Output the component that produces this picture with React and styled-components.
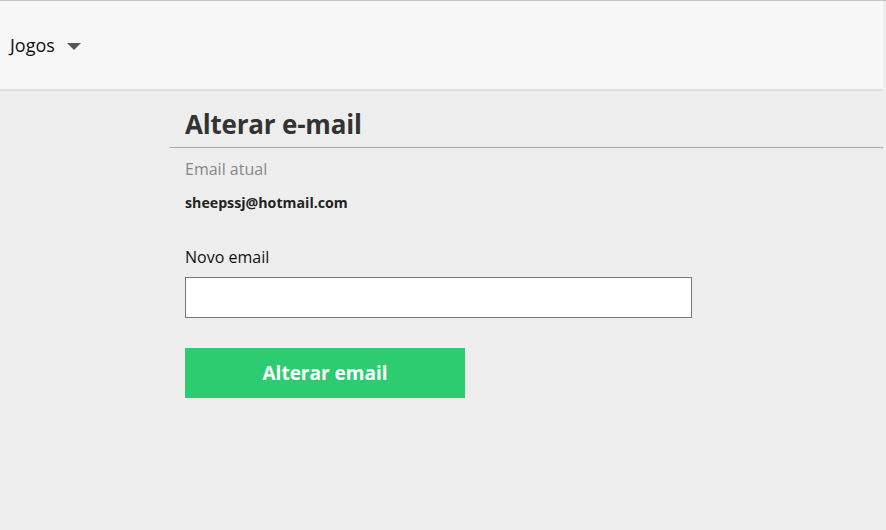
import styled, { createGlobalStyle } from 'styled-components'

const GlobalStyle = createGlobalStyle`
  html, body {
    margin: 0;
    padding: 0;
    background: #eeeeee;
    font-family: 'Open Sans', 'Noto Sans', sans-serif;
  }
`

export default function App () {
  return (
    <>
      <GlobalStyle />
      <Page>
        <TopBar>
          <MenuItem>
            Jogos
            <Caret />
          </MenuItem>
        </TopBar>
        <Main>
          <Title>Alterar e-mail</Title>
          <Section>
            <Muted>Email atual</Muted>
            <CurrentEmail>sheepssj@hotmail.com</CurrentEmail>
            <Label htmlFor='novo'>Novo email</Label>
            <Input id='novo' type='email' />
            <Button type='button'>Alterar email</Button>
          </Section>
        </Main>
      </Page>
    </>
  )
}

const Page = styled.div`
  min-height: 530px;
  border-top: 1px solid #c4c4c4;
`

const TopBar = styled.header`
  height: 90px;
  width: 883px;
  background: #f7f7f7;
  border-bottom: 2px solid #dedede;
  display: flex;
  align-items: center;
  padding-left: 10px;
  box-sizing: border-box;
`

const MenuItem = styled.div`
  display: flex;
  align-items: center;
  gap: 12px;
  font-size: 18px;
  color: #111;
`

const Caret = styled.span`
  width: 0;
  height: 0;
  border-left: 7px solid transparent;
  border-right: 7px solid transparent;
  border-top: 7px solid #555;
  margin-top: 2px;
`

const Main = styled.main`
  padding-left: 170px;
  width: 883px;
  box-sizing: border-box;
`

const Title = styled.h1`
  margin: 0;
  padding: 15px 0 5px 15px;
  font-size: 26px;
  font-weight: 700;
  color: #333;
  border-bottom: 1px solid #aaaaaa;
  letter-spacing: -0.2px;
`

const Section = styled.section`
  padding: 10px 15px;
  display: flex;
  flex-direction: column;
  align-items: flex-start;
`

const Muted = styled.div`
  font-size: 16px;
  color: #888;
`

const CurrentEmail = styled.div`
  margin-top: 13px;
  font-size: 14.2px;
  font-weight: 700;
  color: #222;
`

const Label = styled.label`
  margin-top: 34px;
  font-size: 16px;
  color: #111;
`

const Input = styled.input`
  margin-top: 9px;
  width: 507px;
  height: 41px;
  box-sizing: border-box;
  border: 1px solid #777;
  background: #fff;
  outline: none;
`

const Button = styled.button`
  margin-top: 30px;
  width: 280px;
  height: 50px;
  border: none;
  background: #2ecc71;
  color: #fff;
  font-family: inherit;
  font-size: 19px;
  font-weight: 700;
  cursor: pointer;
`
